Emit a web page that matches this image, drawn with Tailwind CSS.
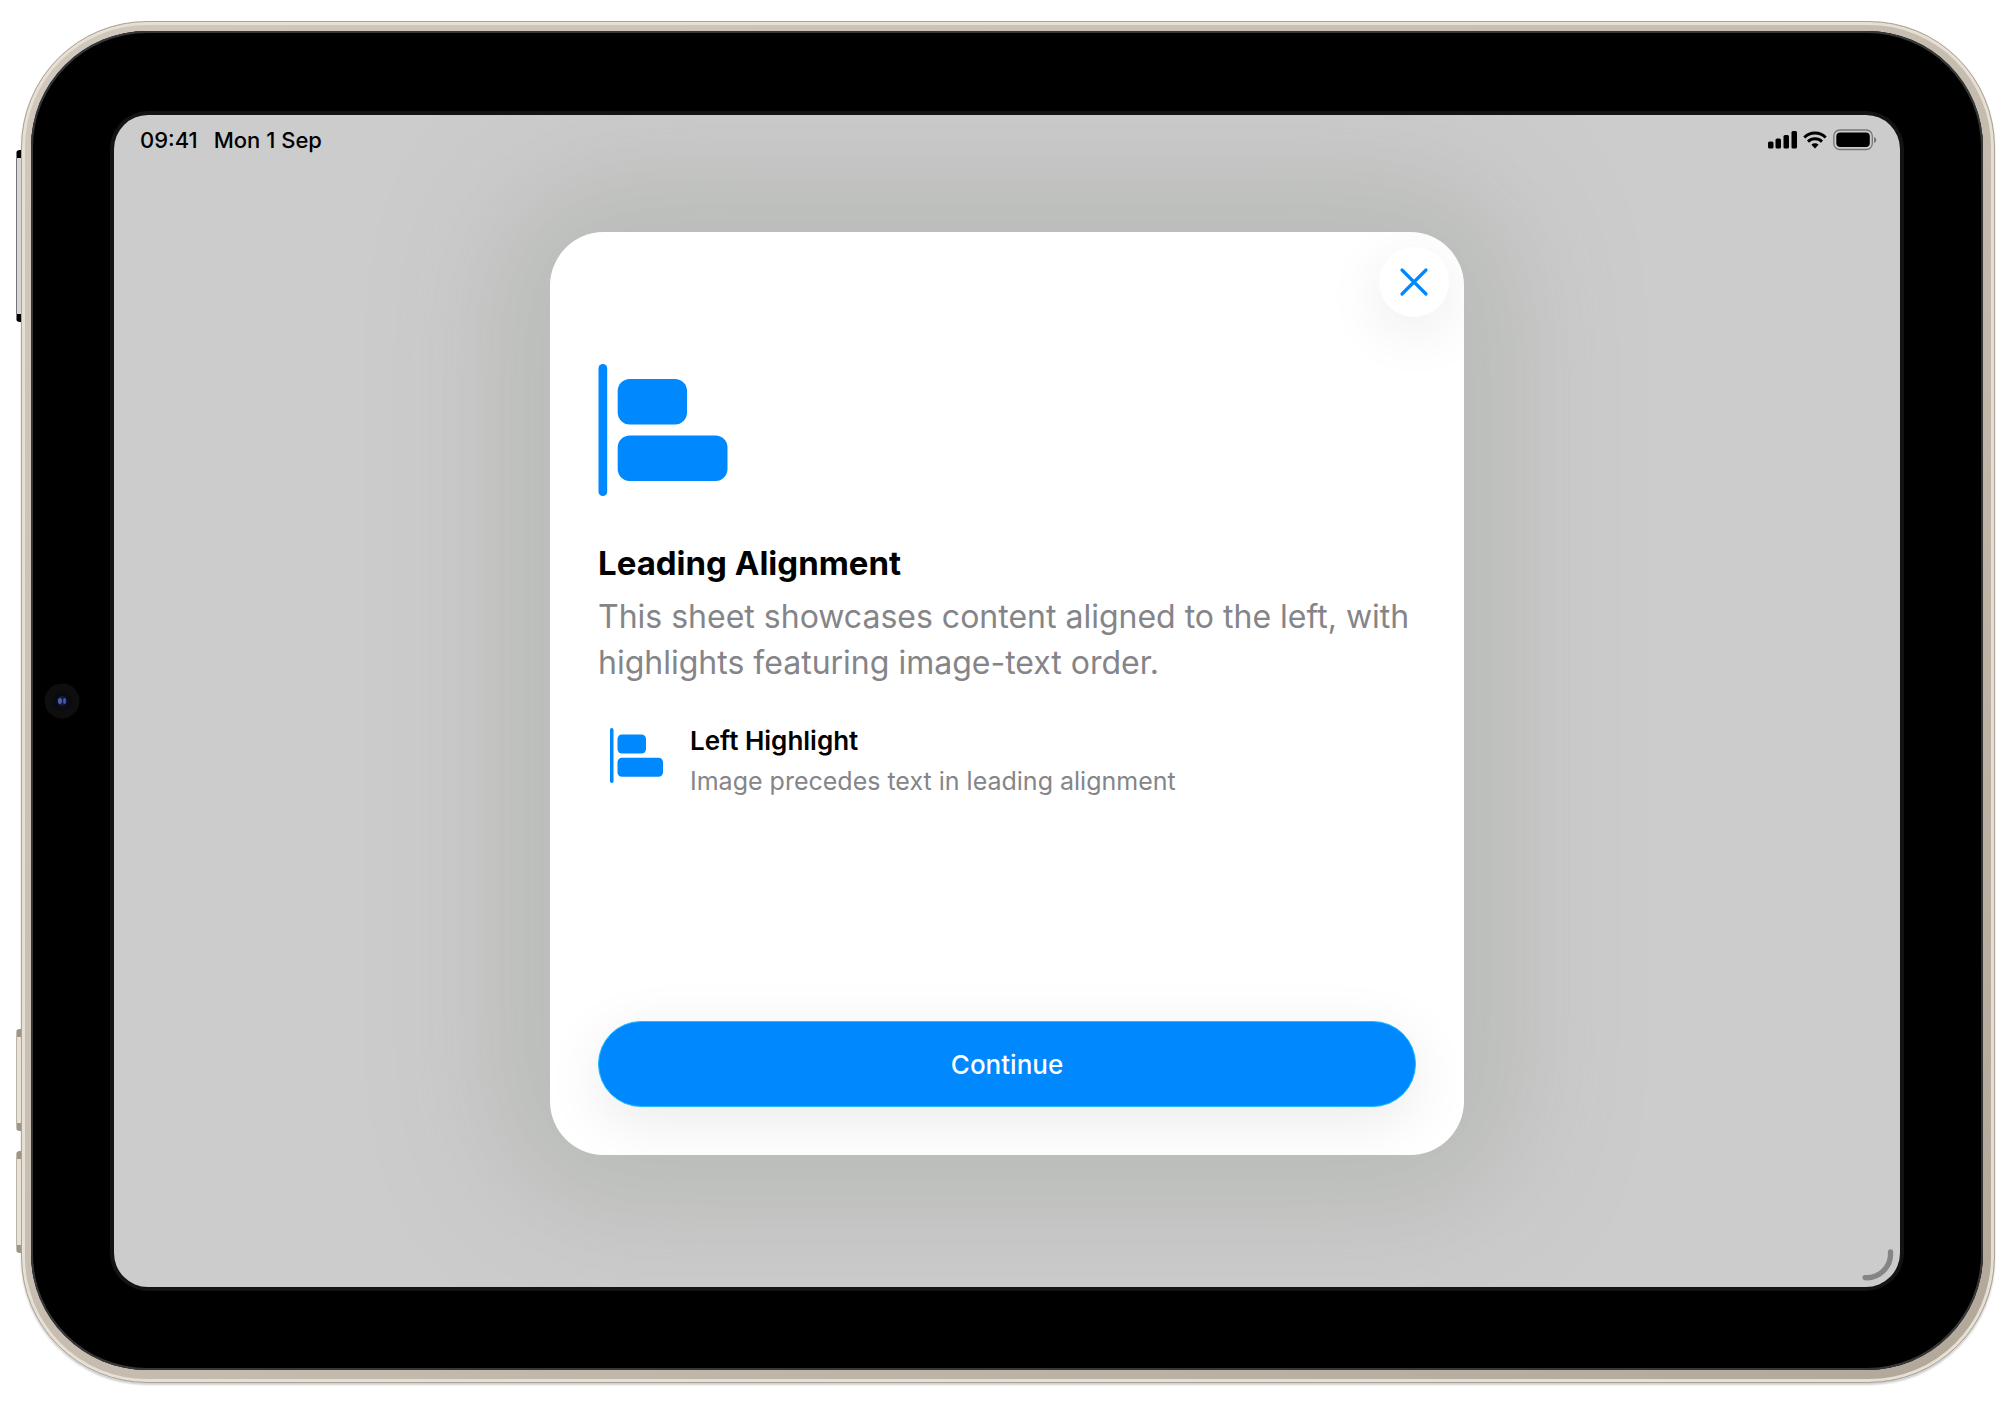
<!DOCTYPE html>
<html lang="en">
<head>
<meta charset="utf-8">
<meta name="viewport" content="width=device-width, initial-scale=1">
<title>Leading Alignment</title>
<script src="https://cdn.jsdelivr.net/npm/@tailwindcss/browser@4"></script>
</head>
<body class="bg-white font-['Inter','Liberation_Sans',sans-serif] text-black">
<div class="flex min-h-screen flex-col pt-[21px] pr-[19px] pb-[25px] pl-[21px]">
  <!-- Tablet body -->
  <div class="relative flex flex-1 flex-col rounded-[126px] border border-[#aaa396] bg-linear-to-br from-[#d0c8bc] via-[#c6bdb0] to-[#b2a89a] pt-[9px] pr-[11px] pb-3 pl-[9px] shadow-[inset_0_0_0_3px_#e6dfd4,0_2px_2px_#00000030]">
    <!-- Hardware keys -->
    <div class="absolute top-[128px] -left-[6px] h-[172px] w-[5px] rounded-l-sm border-y-8 border-l border-y-black border-l-[#777] bg-[#d6d6d6]"></div>
    <div class="absolute top-[1007px] -left-[6px] h-[102px] w-[5px] rounded-l-sm border-y-8 border-l border-y-[#9d9587] border-l-[#bbb3a6] bg-[#e6e0d6]"></div>
    <div class="absolute top-[1129px] -left-[6px] h-[102px] w-[5px] rounded-l-sm border-y-8 border-l border-y-[#9d9587] border-l-[#bbb3a6] bg-[#e6e0d6]"></div>

    <!-- Bezel -->
    <div class="relative flex flex-1 flex-col rounded-[116px] bg-black px-[83px] pt-[84px] pb-[83px] shadow-[inset_0_0_0_2px_#363738]">
      <svg class="absolute top-1/2 left-[13px] size-9 -translate-y-1/2" viewBox="0 0 36 36" aria-hidden="true">
        <circle cx="18" cy="18" r="17.500" fill="#0e0e0f"/>
        <circle cx="18" cy="18" r="10" fill="#090b12"/>
        <circle cx="18" cy="18" r="5" fill="#15183a"/>
        <ellipse cx="16" cy="18" rx="2" ry="3" fill="#4a5fb0"/>
        <ellipse cx="20.500" cy="18" rx="1.500" ry="3" fill="#4454a8"/>
      </svg>

      <!-- Screen -->
      <div class="relative flex flex-1 flex-col rounded-[34px] bg-[#ccc] shadow-[0_0_0_4px_#131313]">
        <div class="absolute inset-0 overflow-hidden rounded-[34px]">
          <div class="mx-auto mt-[117px] h-[calc(100%-249px)] w-[914px] max-w-full rounded-[54px] shadow-[0_0_130px_50px_#7c887842]"></div>
        </div>

        <header class="relative flex h-[50px] items-center justify-between pr-[23px] pl-[26px] text-[22px] font-medium">
          <div class="flex gap-4 pt-px">
            <time>09:41</time>
            <span>Mon 1 Sep</span>
          </div>
          <svg class="h-6 w-[110px]" viewBox="0 0 110 24" role="img" aria-label="Signal, Wi-Fi and battery">
            <rect x="1" y="13.500" width="5.500" height="7" rx="1.500"/>
            <rect x="8.500" y="10.500" width="5.500" height="10" rx="1.500"/>
            <rect x="16.500" y="7" width="5.500" height="13.500" rx="1.500"/>
            <rect x="24.500" y="3" width="5.500" height="17.500" rx="1.500"/>
            <g fill="none" stroke="#000" stroke-width="2.900">
              <path d="M37.300 9.500a15 15 0 0 1 21.400 0"/>
              <path d="M41 13.600a10 10 0 0 1 14 0"/>
            </g>
            <path d="M44.400 16.800a5.200 5.200 0 0 1 7.200 0L48 20.500Z"/>
            <rect x="66.800" y="2" width="38.500" height="19.500" rx="6" fill="none" stroke="#777" stroke-width="1.300"/>
            <rect x="69.300" y="4.500" width="33.500" height="14.500" rx="4"/>
            <path d="M107 9v6c3-1 3-5 0-6Z" fill="#777"/>
          </svg>
        </header>

        <!-- Sheet -->
        <main role="dialog" aria-labelledby="sheet-title" class="relative mx-auto mt-[67px] mb-[132px] flex w-[914px] max-w-full flex-1 flex-col overflow-hidden rounded-[54px] bg-white">
          <div class="flex justify-end px-[15px] pt-[15px]">
            <button type="button" aria-label="Close" class="flex size-[70px] items-center justify-center rounded-full bg-white shadow-[0_14px_60px_#00000016]">
              <svg class="size-8" viewBox="0 0 32 32" fill="none" stroke="#0088ff" stroke-width="3.200" stroke-linecap="round"><path d="m4 4 24 24M28 4 4 28"/></svg>
            </button>
          </div>

          <div class="flex flex-1 flex-col px-12 pt-[46px] pb-12">
            <svg class="h-[134px] w-[130px]" viewBox="0 0 130 134" fill="#0088ff" aria-hidden="true">
              <rect x=".500" y="1" width="8.700" height="132" rx="4.300"/>
              <rect x="19.700" y="16" width="69.300" height="45.500" rx="12"/>
              <rect x="19.700" y="72.500" width="109.800" height="45.500" rx="12"/>
            </svg>
            <h1 id="sheet-title" class="mt-[46px] text-[33px] leading-10 font-bold">Leading Alignment</h1>
            <p class="mt-[11px] text-[32px] leading-[46px] text-[#858589]">This sheet showcases content aligned to the left, with highlights featuring image-text order.</p>

            <div class="mt-[35px] flex items-start gap-[26px] pl-3">
              <svg class="mt-[7px] h-[55px] w-[54px] shrink-0" viewBox="0 0 54 55" fill="#0088ff" aria-hidden="true">
                <rect width="3.500" height="55" rx="1.750"/>
                <rect x="7.500" y="6.500" width="28.500" height="19" rx="4.500"/>
                <rect x="7.500" y="29.800" width="45.500" height="19" rx="4.500"/>
              </svg>
              <div>
                <h2 class="text-[26px] leading-10 font-semibold">Left Highlight</h2>
                <p class="text-[25px] leading-10 text-[#858589]">Image precedes text in leading alignment</p>
              </div>
            </div>

            <button type="button" class="mt-auto h-[86px] w-full rounded-full border border-[#1fbcff] bg-[#0088ff] text-[26px] font-medium text-white shadow-[0_14px_60px_#00000016]">Continue</button>
          </div>
        </main>

        <svg class="absolute right-[6px] bottom-[6px] size-8" viewBox="0 0 32 32" fill="none" stroke="#858585" stroke-width="5.300" stroke-linecap="round" aria-hidden="true"><path d="M28.500 3A24 24 0 0 1 3 28.700"/></svg>
      </div>
    </div>
  </div>
</div>
</body>
</html>
